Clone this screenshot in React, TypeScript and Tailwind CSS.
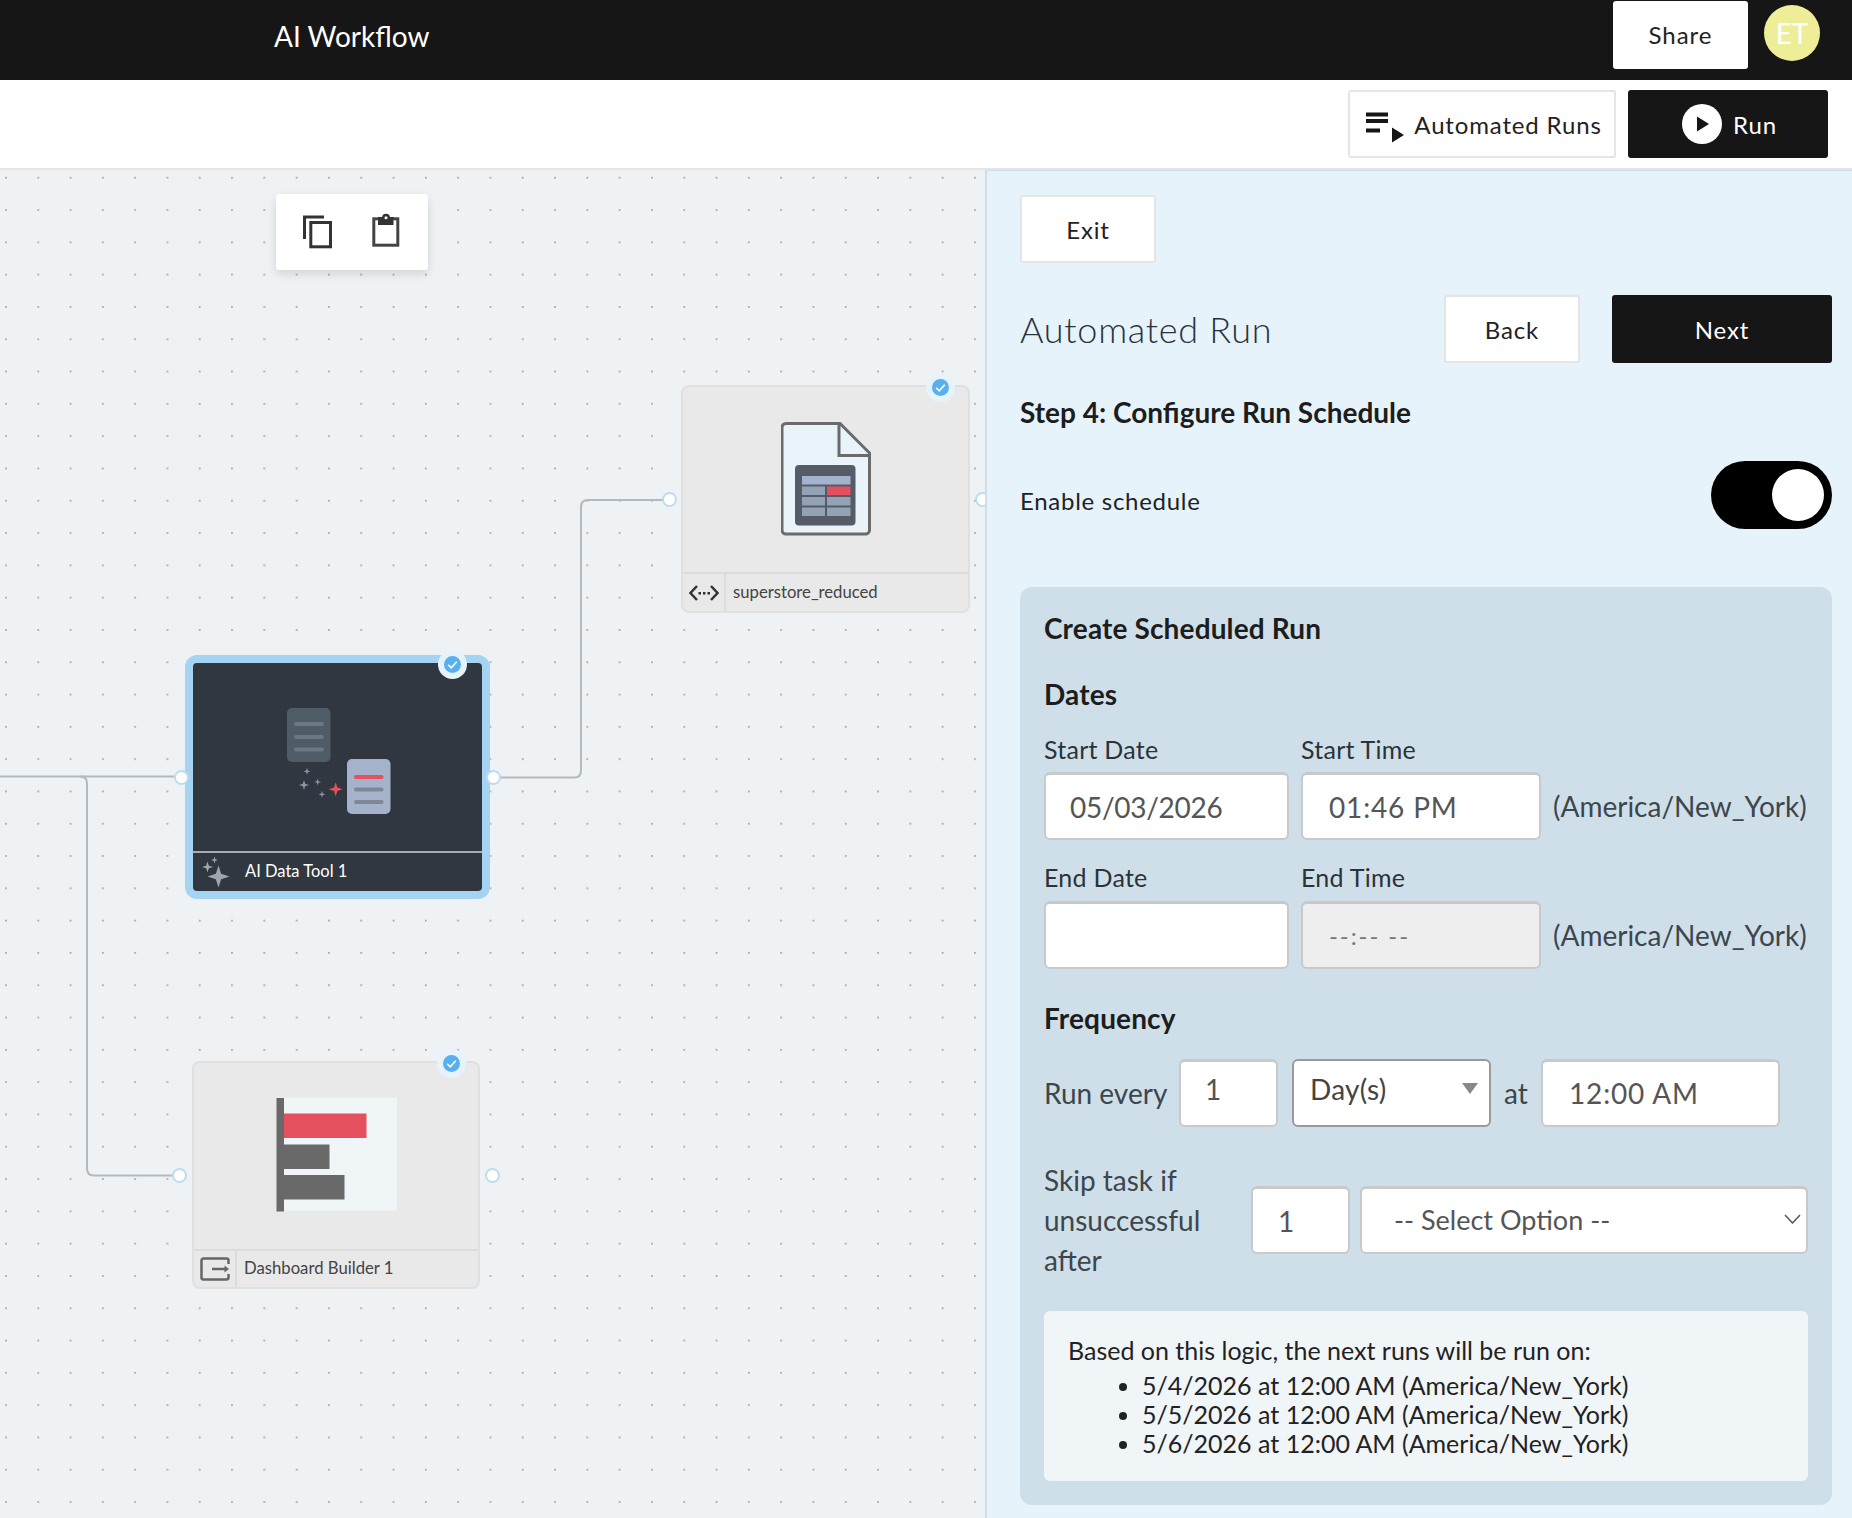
import React from 'react'

function sparkle(x: number, y: number, r: number) {
  const k = r * 0.24
  return `M${x} ${y - r}L${x + k} ${y - k}L${x + r} ${y}L${x + k} ${y + k}L${x} ${y + r}L${x - k} ${y + k}L${x - r} ${y}L${x - k} ${y - k}Z`
}

function Badge({ className }: { className: string }) {
  return (
    <div className={`absolute w-[29px] h-[29px] rounded-full bg-[#e7f3fa] flex items-center justify-center ${className}`}>
      <svg width="17" height="17" viewBox="0 0 17 17">
        <circle cx="8.5" cy="8.5" r="8.5" fill="#58b0ee" />
        <path d="M4.2 8.8l3 3 5.6-6" fill="none" stroke="#fff" strokeWidth="1.6" />
      </svg>
    </div>
  )
}

function Port({ className }: { className: string }) {
  return <div className={`absolute w-[15px] h-[15px] rounded-full bg-white border-2 border-[#bddcef] ${className}`} />
}

function AiIcon() {
  return (
    <svg width="104" height="106" viewBox="0 0 104 106" className="absolute left-[94px] top-[45px]">
      <rect x="0" y="0" width="43.5" height="54" rx="5" fill="#4f5b67" />
      <rect x="7" y="14" width="30" height="4" rx="2" fill="#6c7783" />
      <rect x="7" y="27" width="30" height="4" rx="2" fill="#6c7783" />
      <rect x="7" y="39.500" width="30" height="4" rx="2" fill="#6c7783" />
      <rect x="60" y="51" width="43.500" height="55" rx="5" fill="#a4b3cb" />
      <rect x="67" y="67" width="29.500" height="4" rx="2" fill="#e5505f" />
      <rect x="67" y="79.500" width="29.500" height="4" rx="2" fill="#7d8894" />
      <rect x="67" y="92" width="29.500" height="4" rx="2" fill="#7d8894" />
      <path d={sparkle(20, 63.300, 3.500)} fill="#8794a2" />
      <path d={sparkle(17, 77, 5)} fill="#8794a2" />
      <path d={sparkle(30.700, 74, 3.500)} fill="#8794a2" />
      <path d={sparkle(35, 86.300, 3.500)} fill="#8794a2" />
      <path d={sparkle(48.700, 81.300, 7)} fill="#e5505f" />
    </svg>
  )
}

function DocIcon() {
  return (
    <svg width="90" height="114" viewBox="0 0 90 114" className="absolute left-[98px] top-[35px]">
      <path d="M5 1.500H59L88.500 31V108a4 4 0 0 1-4 4H5a4 4 0 0 1-4-4V5.500a4 4 0 0 1 4-4Z" fill="#e9f3fa" stroke="#6b6b6b" strokeWidth="3" />
      <path d="M58 2V33.500H88" fill="none" stroke="#6b6b6b" strokeWidth="3" />
      <rect x="14" y="43" width="60.500" height="60.500" rx="4" fill="#545c68" />
      <rect x="21" y="54" width="48.500" height="8.500" fill="#a4b3cb" />
      <rect x="21" y="64.500" width="23" height="8.500" fill="#93a2b4" />
      <rect x="46" y="64.500" width="23.500" height="8.500" fill="#e5505f" />
      <rect x="21" y="75" width="23" height="8.500" fill="#93a2b4" />
      <rect x="46" y="75" width="23.500" height="8.500" fill="#93a2b4" />
      <rect x="21" y="85.500" width="23" height="8.500" fill="#93a2b4" />
      <rect x="46" y="85.500" width="23.500" height="8.500" fill="#93a2b4" />
    </svg>
  )
}

function BarsIcon() {
  return (
    <svg width="122" height="115" viewBox="0 0 122 115" className="absolute left-[82px] top-[34px]">
      <rect x="8" y="0.500" width="113" height="113" fill="#f0f5f8" />
      <rect x="8" y="16.500" width="82.500" height="24.500" fill="#e5505f" />
      <rect x="8" y="47.500" width="45.500" height="24.500" fill="#696969" />
      <rect x="8" y="78" width="60.500" height="24.500" fill="#696969" />
      <rect x="0.500" y="1" width="7.500" height="113.500" fill="#696969" />
    </svg>
  )
}

function Canvas() {
  return (
    <div className="relative w-[985px] h-full bg-[#eef2f5] overflow-hidden">
      <svg width="985" height="1348" className="absolute left-0 top-0">
        <defs>
          <pattern id="dots" x="5" y="6.800" width="32.300" height="32.300" patternUnits="userSpaceOnUse">
            <rect x="0" y="0" width="1.800" height="1.800" fill="#a3abb2" />
          </pattern>
        </defs>
        <rect width="985" height="1348" fill="url(#dots)" />
        <g fill="none" stroke="#b3babf" strokeWidth="2">
          <path d="M0 606.500H176" />
          <path d="M80 606.500Q87 606.500 87 613.500V998.500Q87 1005.500 94 1005.500H176" />
          <path d="M497 607.500H574Q581 607.500 581 600.500V337Q581 330 588 330H665" />
        </g>
      </svg>

      <div className="absolute left-[276px] top-[24px] w-[152px] h-[76px] bg-white rounded-[3px] shadow-[0_4px_10px_rgba(0,0,0,0.12)]">
        <svg width="152" height="76" viewBox="0 0 152 76">
          <path d="M28.500 45V23H48" fill="none" stroke="#333" strokeWidth="3" />
          <rect x="34.800" y="28.500" width="19.700" height="24.300" fill="none" stroke="#333" strokeWidth="3" />
          <rect x="97.800" y="24.800" width="24" height="26.400" fill="none" stroke="#444" strokeWidth="3" />
          <rect x="102" y="23" width="15.500" height="8" fill="#333" />
          <circle cx="110" cy="23.700" r="4" fill="#333" />
          <circle cx="110" cy="23.700" r="1.500" fill="#fff" />
        </svg>
      </div>

      <div className="absolute left-[681px] top-[215px] w-[289px] h-[228px] rounded-[8px] bg-[#e9e9e9] border-2 border-[#e0e0e0]">
        <DocIcon />
        <div className="absolute left-0 right-0 bottom-0 h-[39px] border-t-2 border-[#dcdcdc] flex items-center">
          <div className="w-[43px] h-full border-r-2 border-[#dcdcdc] flex items-center justify-center">
            <svg width="30" height="18" viewBox="0 0 30 18">
              <path d="M8 2L1.500 9L8 16M22 2L28.500 9L22 16" fill="none" stroke="#333" strokeWidth="2.500" />
              <rect x="9.500" y="8" width="2.500" height="2.500" fill="#333" />
              <rect x="14" y="8" width="2.500" height="2.500" fill="#333" />
              <rect x="18.500" y="8" width="2.500" height="2.500" fill="#333" />
            </svg>
          </div>
          <span className="ml-[7px] text-[16.7px] text-[#444]">superstore_reduced</span>
        </div>
      </div>
      <Badge className="left-[926px] top-[203px]" />
      <Port className="left-[662px] top-[322px]" />
      <Port className="left-[975px] top-[322px]" />

      <div className="absolute left-[185px] top-[485px] w-[305px] h-[244px] rounded-[12px] bg-[#303741] border-[8px] border-[#a4d4f2]">
        <AiIcon />
        <div className="absolute left-0 right-0 bottom-0 h-[40px] border-t-2 border-[#a9acb0] flex items-center">
          <svg width="30" height="32" viewBox="0 0 30 32" className="ml-[8px]">
            <path d={sparkle(17.500, 20.500, 11)} fill="#a2a5a9" />
            <path d={sparkle(6.500, 11, 5.500)} fill="#a2a5a9" />
            <path d={sparkle(13.500, 4, 3.500)} fill="#a2a5a9" />
          </svg>
          <span className="ml-[14px] pb-[1px] text-[16.5px] text-white">AI Data Tool 1</span>
        </div>
      </div>
      <Badge className="left-[438px] top-[480px]" />
      <Port className="left-[174px] top-[600px]" />
      <Port className="left-[486px] top-[600px]" />

      <div className="absolute left-[192px] top-[891px] w-[288px] h-[228px] rounded-[8px] bg-[#e9e9e9] border-2 border-[#e0e0e0]">
        <BarsIcon />
        <div className="absolute left-0 right-0 bottom-0 h-[38px] border-t-2 border-[#dcdcdc] flex items-center">
          <div className="w-[43px] h-full border-r-2 border-[#dcdcdc] flex items-center justify-center">
            <svg width="30" height="24" viewBox="0 0 30 24">
              <path d="M28.500 7V3.500a2 2 0 0 0-2-2H3.500a2 2 0 0 0-2 2V20.500a2 2 0 0 0 2 2H26.500a2 2 0 0 0 2-2V17" fill="none" stroke="#666" strokeWidth="2.500" />
              <path d="M12 12H26" stroke="#666" strokeWidth="2.500" />
              <path d="M24.500 8.500L29 12L24.500 15.500Z" fill="#666" />
            </svg>
          </div>
          <span className="ml-[7px] text-[16.7px] text-[#444]">Dashboard Builder 1</span>
        </div>
      </div>
      <Badge className="left-[437px] top-[879px]" />
      <Port className="left-[172px] top-[998px]" />
      <Port className="left-[485px] top-[998px]" />
    </div>
  )
}

function Label({ className, children }: { className?: string; children: React.ReactNode }) {
  return <div className={`h-[32px] leading-[28px] text-[25px] tracking-[0.01em] text-[#2b3338] ${className ?? ''}`}>{children}</div>
}

const inputBase =
  'h-[68px] rounded-[6px] bg-white border-2 border-[#c9c9c9] border-t-[3px] text-[28px] text-[#555] tracking-[0.03em] outline-none'

function Tz() {
  return <span className="ml-[12px] text-[28px] text-[#3d464c]">(America/New_York)</span>
}

function Panel() {
  return (
    <div className="flex-1 h-full bg-[#e7f3fa] border-l-2 border-l-[#cfdfe9] border-t border-t-[#cfdfe9] pl-[33px] pr-[20px] pt-[24px] text-[#222] overflow-hidden">
      <button className="block w-[136px] h-[68px] pt-[2px] bg-white border-2 border-[#e5e5e5] rounded-[3px] text-[24px] tracking-[0.035em]">Exit</button>

      <div className="mt-[32px] h-[68px] flex items-center justify-between">
        <h2 className="text-[36px] font-light text-[#27323b] tracking-[0.02em]">Automated Run</h2>
        <div className="flex gap-[32px]">
          <button className="w-[136px] h-[68px] pt-[2px] bg-white border-2 border-[#e5e5e5] rounded-[3px] text-[24px] tracking-[0.035em]">Back</button>
          <button className="w-[220px] h-[68px] pt-[2px] bg-[#161616] text-white rounded-[3px] text-[24px] tracking-[0.035em]">Next</button>
        </div>
      </div>

      <h3 className="mt-[29px] h-[40px] leading-[40px] text-[28px] font-bold text-[#1d1d1d]">Step 4: Configure Run Schedule</h3>

      <div className="mt-[29px] h-[68px] flex items-center justify-between">
        <span className="pt-[12px] text-[24px] tracking-[0.03em] text-[#222]">Enable schedule</span>
        <div className="w-[121px] h-[68px] rounded-full bg-black flex items-center justify-end pr-[8px]">
          <div className="w-[52px] h-[52px] rounded-full bg-white" />
        </div>
      </div>

      <div className="mt-[58px] h-[918px] rounded-[12px] bg-[#cfdfe9] px-[24px] pt-[21px]">
        <h3 className="h-[40px] leading-[40px] text-[28px] font-bold tracking-[0.005em] text-[#1d1d1d]">Create Scheduled Run</h3>
        <h3 className="mt-[26px] h-[40px] leading-[40px] text-[28px] font-bold tracking-[0.005em] text-[#1d1d1d]">Dates</h3>

        <div className="mt-[21px] flex">
          <Label className="w-[257px]">Start Date</Label>
          <Label>Start Time</Label>
        </div>
        <div className="mt-[5px] flex items-center">
          <input readOnly value="05/03/2026" className={`${inputBase} w-[245px] pl-[24px] !tracking-[-0.01em]`} />
          <input readOnly value="01:46 PM" className={`${inputBase} ml-[12px] w-[240px] pl-[26px]`} />
          <Tz />
        </div>

        <div className="mt-[23px] flex">
          <Label className="w-[257px]">End Date</Label>
          <Label>End Time</Label>
        </div>
        <div className="mt-[6px] flex items-center">
          <input readOnly className={`${inputBase} w-[245px] pl-[24px]`} />
          <div className={`${inputBase} ml-[12px] w-[240px] pl-[26px] !bg-[#eeeeee] !text-[#777] !text-[24px] !tracking-[0.08em] flex items-center`}>--:-- --</div>
          <Tz />
        </div>

        <h3 className="mt-[29px] h-[40px] leading-[40px] text-[28px] font-bold tracking-[0.005em] text-[#1d1d1d]">Frequency</h3>

        <div className="mt-[21px] flex items-center text-[28px] text-[#3d464c]">
          <span className="w-[135px]">Run every</span>
          <input readOnly value="1" className={`${inputBase} w-[99px] pl-[24px] pb-[10px]`} />
          <div className="relative ml-[14px] w-[199px]">
            <select className="w-full h-[68px] appearance-none rounded-[6px] bg-white border-2 border-[#9a9a9a] pl-[16px] pb-[8px] text-[28px] tracking-[0.01em] text-[#444] outline-none">
              <option>Day(s)</option>
            </select>
            <svg width="16" height="11" viewBox="0 0 16 11" className="absolute right-[13px] top-[24px]">
              <path d="M0 0H16L8 11Z" fill="#888" />
            </svg>
          </div>
          <span className="ml-[13px] w-[37px]">at</span>
          <input readOnly value="12:00 AM" className={`${inputBase} w-[239px] pl-[26px] pb-[2px]`} />
        </div>

        <div className="mt-[33px] flex items-center">
          <div className="w-[207px] text-[28px] leading-[40px] text-[#3d464c]">Skip task if unsuccessful after</div>
          <input readOnly value="1" className={`${inputBase} w-[99px] pl-[25px]`} />
          <div className="relative ml-[10px] w-[448px]">
            <select className="w-full h-[68px] appearance-none rounded-[6px] bg-white border-2 border-[#c9c9c9] border-t-[3px] pl-[32px] text-[27px] text-[#555] outline-none">
              <option>-- Select Option --</option>
            </select>
            <svg width="17" height="10" viewBox="0 0 17 10" className="absolute right-[7px] top-[28px]">
              <path d="M1 1L8.500 9L16 1" fill="none" stroke="#555" strokeWidth="1.500" />
            </svg>
          </div>
        </div>

        <div className="mt-[31px] h-[170px] rounded-[6px] bg-[#f0f5f8] pl-[24px] pt-[25px] text-[25px] leading-[29px] text-[#222]">
          <p>Based on this logic, the next runs will be run on:</p>
          <ul className="mt-[6px] pl-[74px] list-disc">
            <li>5/4/2026 at 12:00 AM (America/New_York)</li>
            <li>5/5/2026 at 12:00 AM (America/New_York)</li>
            <li>5/6/2026 at 12:00 AM (America/New_York)</li>
          </ul>
        </div>
      </div>
    </div>
  )
}

export default function App() {
  return (
    <div className="w-[1852px] h-[1518px] overflow-hidden flex flex-col font-[Lato,sans-serif]">
      <header className="h-[80px] shrink-0 bg-[#161616] flex items-start pl-[274px] pr-[32px]">
        <h1 className="mt-[15px] text-[28px] text-white">AI Workflow</h1>
        <button className="ml-auto mt-[1px] w-[135px] h-[68px] bg-white rounded-[3px] text-[24px] tracking-[0.04em] text-[#222]">Share</button>
        <div className="ml-[16px] mt-[5px] w-[56px] h-[56px] rounded-full bg-[#eeee99] text-white text-[28px] flex items-center justify-center">ET</div>
      </header>

      <div className="h-[90px] shrink-0 bg-white border-b-2 border-[#e5e5e5] flex items-start justify-end pr-[24px] pt-[10px] gap-[12px]">
        <button className="w-[268px] h-[68px] pl-[4px] pt-[2px] bg-white border-2 border-[#e5e5e5] rounded-[3px] flex items-center justify-center gap-[10px] text-[24px] tracking-[0.035em] text-[#222]">
          <svg width="38" height="32" viewBox="0 0 38 32" className="mt-[4px]">
            <rect x="0" y="1.500" width="22" height="4" fill="#161616" />
            <rect x="0" y="8" width="22" height="4" fill="#161616" />
            <rect x="0" y="17.500" width="14" height="4" fill="#161616" />
            <path d="M26 16.500L38 24L26 31.500Z" fill="#161616" />
          </svg>
          Automated Runs
        </button>
        <button className="w-[200px] h-[68px] pl-[3px] bg-[#161616] rounded-[3px] flex items-center justify-center gap-[11px] text-[24px] tracking-[0.035em] text-white">
          <svg width="40" height="40" viewBox="0 0 40 40">
            <circle cx="20" cy="20" r="20" fill="#fff" />
            <path d="M15 12.500L27 20L15 27.500Z" fill="#161616" />
          </svg>
          <span className="pt-[2px]">Run</span>
        </button>
      </div>

      <div className="flex-1 min-h-0 flex">
        <Canvas />
        <Panel />
      </div>
    </div>
  )
}
